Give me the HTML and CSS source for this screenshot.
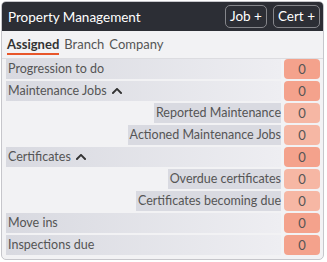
FILE: index.html
```html
<!DOCTYPE html>
<html lang="en">
<head>
    <meta charset="UTF-8">
    <title>Property Management</title>
    <link rel="stylesheet" href="styles.css">
</head>
<body>
    <div class="card">
        <div class="card-header">
            <span class="card-title">Property Management</span>
            <div class="header-buttons">
                <button class="btn-outline">Job +</button>
                <button class="btn-outline">Cert +</button>
            </div>
        </div>
        <div class="tabs">
            <span class="tab active">Assigned</span>
            <span class="tab">Branch</span>
            <span class="tab">Company</span>
        </div>
        <div class="rows">
            <div class="row">
                <div class="label main">Progression to do</div>
                <div class="badge">0</div>
            </div>
            <div class="row">
                <div class="label main">Maintenance Jobs
                    <svg class="chevron" viewBox="0 0 448 512"><path d="M240.971 130.524l194.343 194.343c9.373 9.373 9.373 24.569 0 33.941l-22.667 22.667c-9.357 9.357-24.522 9.375-33.901.04L224 227.495 69.255 381.516c-9.379 9.335-24.544 9.317-33.901-.04l-22.667-22.667c-9.373-9.373-9.373-24.569 0-33.941L207.03 130.525c9.372-9.373 24.568-9.373 33.941-.001z"/></svg>
                </div>
                <div class="badge">0</div>
            </div>
            <div class="row">
                <div class="label sub"><span>Reported Maintenance</span></div>
                <div class="badge light">0</div>
            </div>
            <div class="row">
                <div class="label sub"><span>Actioned Maintenance Jobs</span></div>
                <div class="badge light">0</div>
            </div>
            <div class="row">
                <div class="label main">Certificates
                    <svg class="chevron" viewBox="0 0 448 512"><path d="M240.971 130.524l194.343 194.343c9.373 9.373 9.373 24.569 0 33.941l-22.667 22.667c-9.357 9.357-24.522 9.375-33.901.04L224 227.495 69.255 381.516c-9.379 9.335-24.544 9.317-33.901-.04l-22.667-22.667c-9.373-9.373-9.373-24.569 0-33.941L207.03 130.525c9.372-9.373 24.568-9.373 33.941-.001z"/></svg>
                </div>
                <div class="badge">0</div>
            </div>
            <div class="row">
                <div class="label sub"><span>Overdue certificates</span></div>
                <div class="badge light">0</div>
            </div>
            <div class="row">
                <div class="label sub"><span>Certificates becoming due</span></div>
                <div class="badge light">0</div>
            </div>
            <div class="row">
                <div class="label main">Move ins</div>
                <div class="badge">0</div>
            </div>
            <div class="row">
                <div class="label main">Inspections due</div>
                <div class="badge">0</div>
            </div>
        </div>
    </div>
</body>
</html>
```

FILE: styles.css
```css
body {
    margin: 0;
    padding: 1px;
    font-family: Lato, sans-serif;
    background-color: #ffffff;
}
.card {
    width: 321px;
    height: 257px;
    border: 1px solid #c6c6cb;
    border-radius: 5px;
    background-color: #f2f2f4;
    overflow: hidden;
}
.card-header {
    height: 29px;
    background-color: #2c2e35;
    display: flex;
    align-items: center;
    justify-content: space-between;
    padding: 0 3px 0 6px;
}
.card-title {
    color: #ffffff;
    font-size: 13.5px;
}
.header-buttons {
    display: flex;
    gap: 6px;
}
.btn-outline {
    font-family: Lato, sans-serif;
    font-size: 13.5px;
    color: #ffffff;
    background: transparent;
    border: 1px solid #85868b;
    border-radius: 5px;
    height: 23px;
    padding: 0 4px;
    line-height: 1;
}
.tabs {
    display: flex;
    gap: 5px;
    padding: 5px 5px 0;
    height: 28px;
    border-bottom: 1px solid #dcdce0;
    box-sizing: border-box;
}
.tab {
    font-size: 13px;
    color: #555;
    height: 17px;
}
.tab.active {
    font-weight: bold;
    color: #333;
    border-bottom: 2px solid #e8562a;
}
.rows {
    display: flex;
    flex-direction: column;
    gap: 2px;
    padding: 0 3px 0 4px;
}
.row {
    display: flex;
    height: 20px;
    gap: 3px;
}
.label {
    flex: 1;
    font-size: 12.5px;
    color: #555;
    line-height: 20px;
}
.label.main {
    padding-left: 2px;
    background: linear-gradient(to right, #d8d9e0, #eeeef2);
    display: flex;
    align-items: center;
    gap: 4px;
}
.label.sub {
    text-align: right;
}
.label.sub span {
    display: inline-block;
    background-color: #d9dae1;
    padding-left: 2px;
}
.chevron {
    width: 12px;
    height: 12px;
    fill: #333;
}
.badge {
    width: 36px;
    border-radius: 4px;
    background-color: #f4a28c;
    color: #555;
    font-size: 13px;
    text-align: center;
    line-height: 20px;
}
.badge.light {
    background-color: #f6b7a4;
}
```
